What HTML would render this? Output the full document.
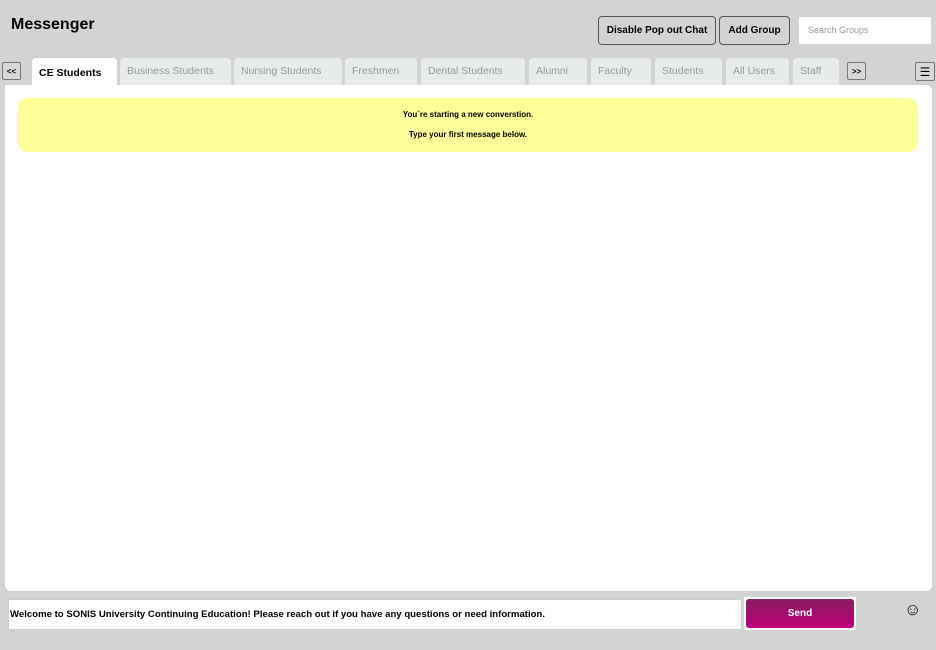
<!DOCTYPE html>
<html><head><style>
body{margin:0;width:936px;height:650px;background:#d3d3d3;font-family:"Liberation Sans",sans-serif;position:relative;overflow:hidden}
.a{position:absolute;box-sizing:border-box}
h1{position:absolute;left:11px;top:16px;margin:0;font-size:16px;font-weight:bold}
.btn{border:1px solid #555;border-radius:4px;background:#d3d3d3;font-size:10px;font-weight:bold;display:flex;align-items:center;justify-content:center}
.tab{top:58px;height:27px;background:#e8ebeb;border-radius:4px 4px 0 0;font-size:10.5px;color:#999;padding-left:7px;line-height:27px}
.sm{border:1px solid #777;border-radius:2px;font-size:8px;font-weight:bold;display:flex;align-items:center;justify-content:center;background:#d8d8d8}
</style></head><body>
<h1>Messenger</h1>
<div class="a btn" style="left:598px;top:16px;width:118px;height:29px">Disable Pop out Chat</div>
<div class="a btn" style="left:719px;top:16px;width:71px;height:29px">Add Group</div>
<div class="a" style="left:799px;top:17px;width:132px;height:27px;background:#fff;font-size:9px;color:#999;padding:8px 9px">Search Groups</div>
<div class="a sm" style="left:2px;top:62px;width:19px;height:18px">&lt;&lt;</div>
<div class="a tab" style="left:32px;width:85px;background:#fff;color:#000;font-weight:bold;line-height:30px">CE Students</div>
<div class="a tab" style="left:120px;width:111px">Business Students</div>
<div class="a tab" style="left:234px;width:108px">Nursing Students</div>
<div class="a tab" style="left:345px;width:72px">Freshmen</div>
<div class="a tab" style="left:421px;width:104px">Dental Students</div>
<div class="a tab" style="left:529px;width:58px">Alumni</div>
<div class="a tab" style="left:591px;width:60px">Faculty</div>
<div class="a tab" style="left:655px;width:67px">Students</div>
<div class="a tab" style="left:726px;width:63px">All Users</div>
<div class="a tab" style="left:793px;width:46px">Staff</div>
<div class="a sm" style="left:847px;top:62px;width:19px;height:18px">&gt;&gt;</div>
<div class="a sm" style="left:915px;top:62px;width:20px;height:19px;font-size:12px;font-weight:normal">☰</div>
<div class="a" style="left:5px;top:85px;width:927px;height:506px;background:#fff;border-radius:0 6px 6px 6px"></div>
<div class="a" style="left:18px;top:98px;width:900px;height:54px;background:#ffff99;border-radius:10px;font-size:8px;font-weight:bold;text-align:center;padding-top:7px;line-height:20px">You`re starting a new converstion.<br>Type your first message below.</div>
<div class="a" style="left:8px;top:599px;width:734px;height:31px;background:#fff;border:1px solid #ccc;font-size:9.6px;font-weight:bold;padding:9px 1px">Welcome to SONIS University Continuing Education! Please reach out if you have any questions or need information.</div>
<div class="a" style="left:744px;top:597px;width:112px;height:33px;border:1px solid #fff;background:#fff;padding:1px"><div style="height:100%;border-radius:3px;background:linear-gradient(#8a1c60,#bf0079);color:#fff;font-size:10px;font-weight:bold;display:flex;align-items:center;justify-content:center">Send</div></div>
<div class="a" style="left:904px;top:600px;font-size:17px">☺</div>
</body></html>
